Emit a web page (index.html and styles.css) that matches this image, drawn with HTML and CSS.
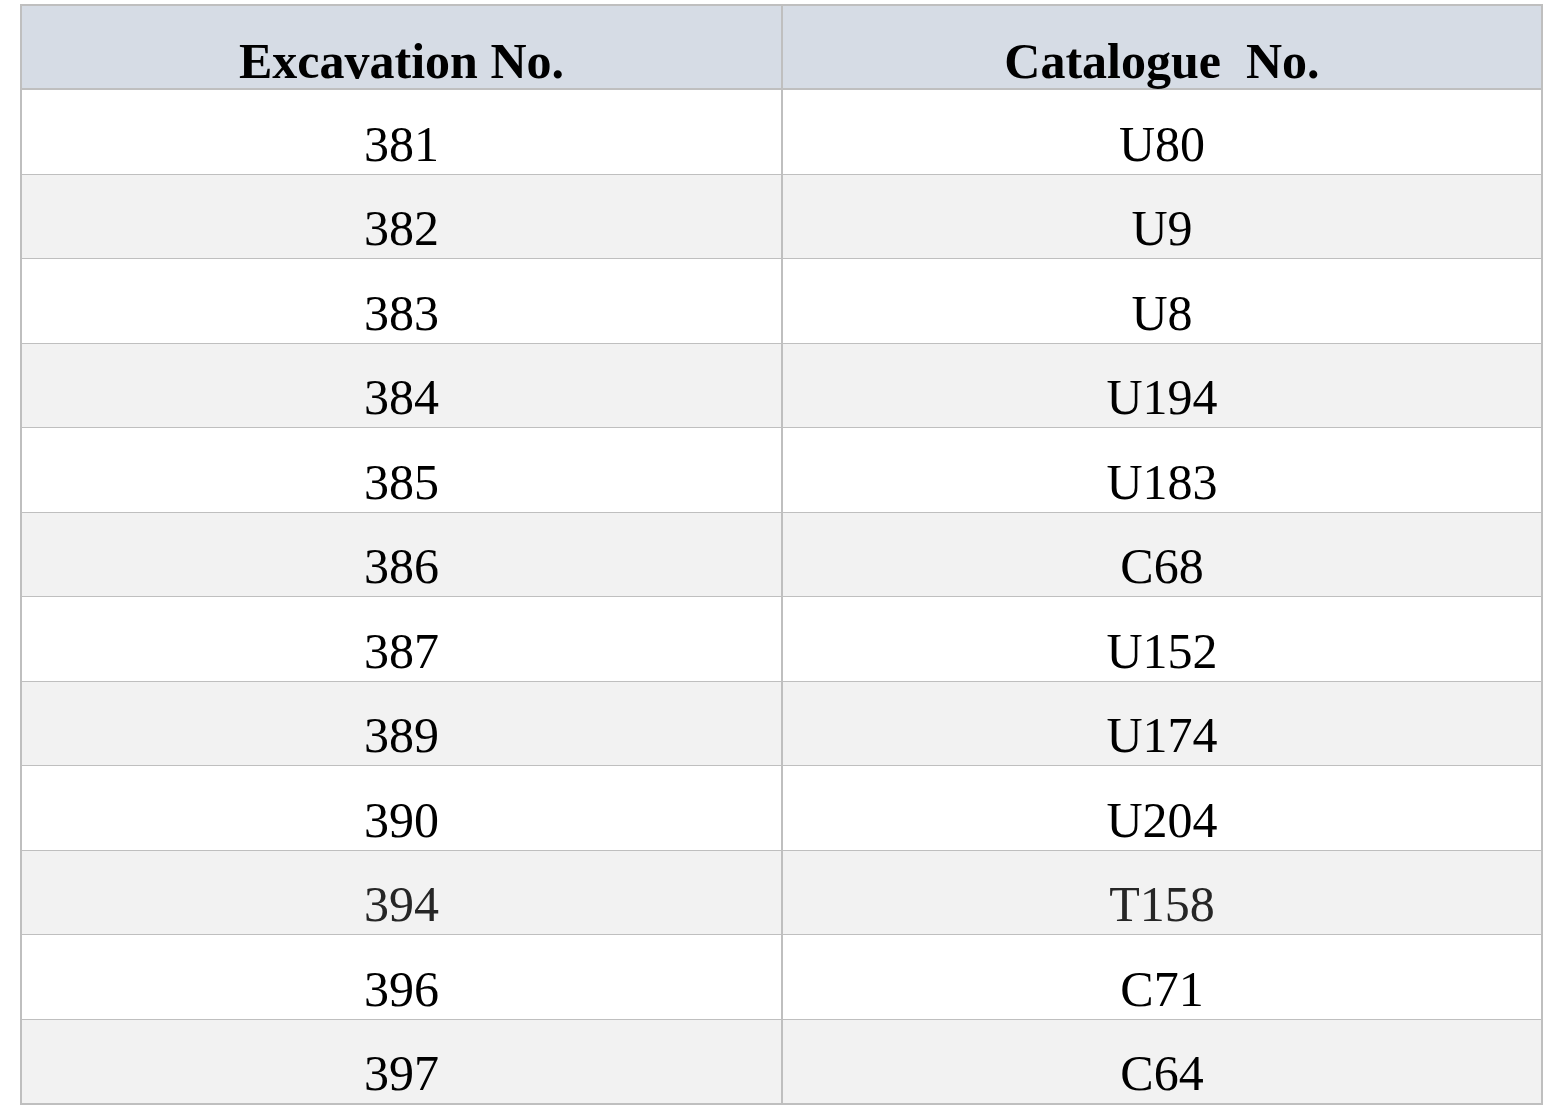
FILE: index.html
```html
<!DOCTYPE html>
<html>
<head>
<meta charset="utf-8">
<link rel="stylesheet" href="styles.css">
</head>
<body>
<table class="catalogue">
  <thead>
    <tr><th class="col-a">Excavation No.</th><th class="col-b">Catalogue&nbsp; No.</th></tr>
  </thead>
  <tbody>
    <tr><td>381</td><td>U80</td></tr>
    <tr><td>382</td><td>U9</td></tr>
    <tr><td>383</td><td>U8</td></tr>
    <tr><td>384</td><td>U194</td></tr>
    <tr><td>385</td><td>U183</td></tr>
    <tr><td>386</td><td>C68</td></tr>
    <tr><td>387</td><td>U152</td></tr>
    <tr><td>389</td><td>U174</td></tr>
    <tr><td>390</td><td>U204</td></tr>
    <tr class="muted"><td>394</td><td>T158</td></tr>
    <tr><td>396</td><td>C71</td></tr>
    <tr><td>397</td><td>C64</td></tr>
  </tbody>
</table>
</body>
</html>
```
FILE: styles.css
```css
html, body {
  margin: 0;
  padding: 0;
  background: #ffffff;
}
.catalogue {
  margin: 4px 0 0 20px;
  width: 1523px;
  table-layout: fixed;
  border-collapse: separate;
  border-spacing: 0;
  border: 2px solid #bfbfbf;
  font-family: "Liberation Serif", "Times New Roman", serif;
  font-size: 50px;
  color: #000;
}
.catalogue th,
.catalogue td {
  padding: 0 0 1px 0;
  text-align: center;
  vertical-align: bottom;
  line-height: normal;
}
.catalogue .col-a { width: 759px; }
.catalogue th {
  height: 81px;
  line-height: 1.02;
  background: #d6dce5;
  font-weight: bold;
  border-bottom: 2px solid #bfbfbf;
}
.catalogue th:first-child,
.catalogue td:first-child {
  border-right: 2px solid #bfbfbf;
}
.catalogue td {
  height: 82.5px;
  border-bottom: 1px solid #bfbfbf;
  font-weight: normal;
}
.catalogue tbody tr:last-child td {
  border-bottom: none;
}
.catalogue tbody tr:nth-child(even) td {
  background: #f2f2f2;
}
.catalogue tr.muted td {
  color: #262626;
}
```
